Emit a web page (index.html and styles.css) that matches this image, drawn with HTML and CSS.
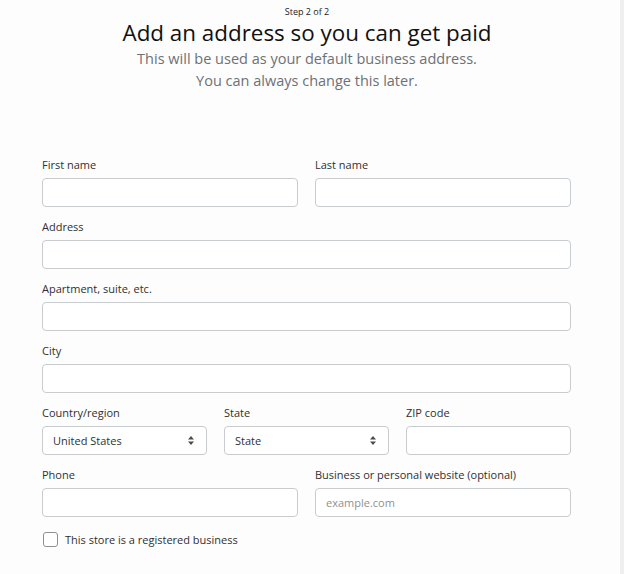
FILE: index.html
```html
<!DOCTYPE html>
<html lang="en">
<head>
    <meta charset="UTF-8">
    <meta name="viewport" content="width=device-width, initial-scale=1.0">
    <title>Add an address</title>
    <link rel="stylesheet" href="styles.css">
</head>
<body>
    <div id="page">
        <div class="header">
            <p class="step">Step 2 of 2</p>
            <h1>Add an address so you can get paid</h1>
            <p class="sub">This will be used as your default business address.<br>You can always change this later.</p>
        </div>

        <form id="addressForm">
            <div class="row two">
                <div class="field">
                    <label for="first">First name</label>
                    <input type="text" class="txtBox" id="first">
                </div>
                <div class="field">
                    <label for="last">Last name</label>
                    <input type="text" class="txtBox" id="last">
                </div>
            </div>
            <div class="field">
                <label for="address">Address</label>
                <input type="text" class="txtBox" id="address">
            </div>
            <div class="field">
                <label for="apt">Apartment, suite, etc.</label>
                <input type="text" class="txtBox" id="apt">
            </div>
            <div class="field">
                <label for="city">City</label>
                <input type="text" class="txtBox" id="city">
            </div>
            <div class="row three">
                <div class="field">
                    <label>Country/region</label>
                    <div class="selectBox">United States
                        <svg class="arrows" width="6" height="9" viewBox="0 0 6 9"><path d="M3 0L6 3.5H0z M3 9L0 5.5H6z" fill="#4a4a4a"/></svg>
                    </div>
                </div>
                <div class="field">
                    <label>State</label>
                    <div class="selectBox">State
                        <svg class="arrows" width="6" height="9" viewBox="0 0 6 9"><path d="M3 0L6 3.5H0z M3 9L0 5.5H6z" fill="#4a4a4a"/></svg>
                    </div>
                </div>
                <div class="field">
                    <label for="zip">ZIP code</label>
                    <input type="text" class="txtBox" id="zip">
                </div>
            </div>
            <div class="row two">
                <div class="field">
                    <label for="phone">Phone</label>
                    <input type="text" class="txtBox" id="phone">
                </div>
                <div class="field">
                    <label for="site">Business or personal website (optional)</label>
                    <input type="text" class="txtBox" id="site" placeholder="example.com">
                </div>
            </div>
            <div class="check">
                <span class="box"></span>
                <span>This store is a registered business</span>
            </div>
        </form>
    </div>
    <div class="edge"></div>
</body>
</html>
```

FILE: styles.css
```css
body {
    margin: 0;
    display: flex;
    height: 574px;
    background: #fdfdfd;
    font-family: 'Open Sans', 'Noto Sans', sans-serif;
    color: #202223;
}
#page {
    flex: 1;
}
.edge {
    width: 4px;
    background: #efefef;
}
.header {
    text-align: center;
    padding-top: 7px;
    padding-right: 6px;
}
.step {
    margin: 0;
    font-size: 9px;
    line-height: 10px;
}
h1 {
    margin: 0;
    font-size: 22.4px;
    font-weight: 400;
    line-height: 31px;
    color: #111;
}
.sub {
    margin: 0;
    font-size: 14.5px;
    line-height: 22px;
    color: #6d7175;
}

#addressForm {
    margin-top: 65px;
    margin-left: 42px;
    width: 529px;
    display: flex;
    flex-direction: column;
    gap: 12px;
}
.row {
    display: grid;
    gap: 17px;
}
.row.two {
    grid-template-columns: 1fr 1fr;
}
.row.three {
    grid-template-columns: 1fr 1fr 1fr;
}
.field {
    display: flex;
    flex-direction: column;
}
.field label {
    font-size: 11px;
    line-height: 16px;
    margin-bottom: 5px;
    color: #303030;
}
input.txtBox, .selectBox {
    box-sizing: border-box;
    height: 29px;
    border: 1px solid #c9cccf;
    border-radius: 4px;
    background: #fff;
    font-family: inherit;
    font-size: 11px;
    padding: 0 10px;
    margin: 0;
    width: 100%;
}
input.txtBox::placeholder {
    color: #8c9196;
}
.selectBox {
    display: flex;
    align-items: center;
    justify-content: space-between;
    color: #303030;
}
.arrows {
    margin-right: 2px;
}
.check {
    display: flex;
    align-items: center;
    gap: 7px;
    margin-top: 3px;
    font-size: 11px;
    color: #303030;
}
.box {
    box-sizing: border-box;
    width: 15px;
    height: 15px;
    border: 1px solid #8c9196;
    border-radius: 3px;
    margin-left: 1px;
    background: #fff;
}
```
